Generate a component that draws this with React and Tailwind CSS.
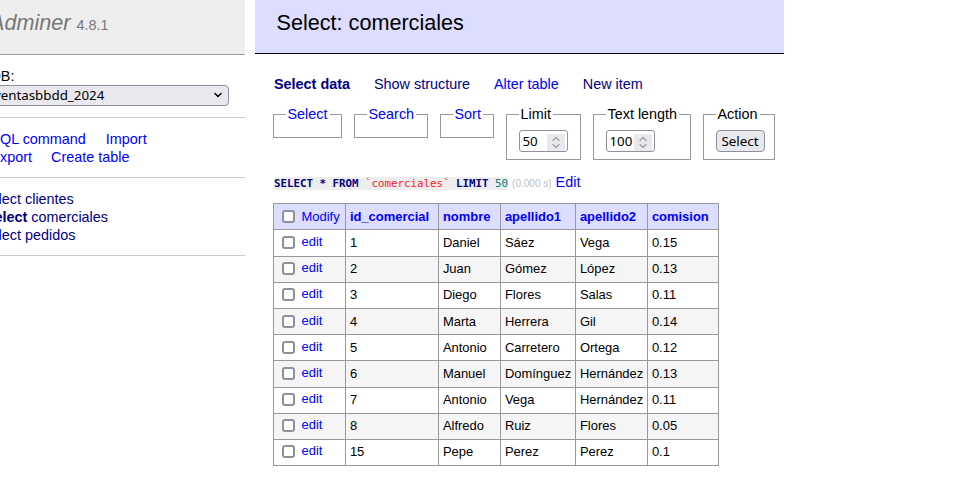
import React from 'react'

const rows = [
  ['1', 'Daniel', 'Sáez', 'Vega', '0.15'],
  ['2', 'Juan', 'Gómez', 'López', '0.13'],
  ['3', 'Diego', 'Flores', 'Salas', '0.11'],
  ['4', 'Marta', 'Herrera', 'Gil', '0.14'],
  ['5', 'Antonio', 'Carretero', 'Ortega', '0.12'],
  ['6', 'Manuel', 'Domínguez', 'Hernández', '0.13'],
  ['7', 'Antonio', 'Vega', 'Hernández', '0.11'],
  ['8', 'Alfredo', 'Ruiz', 'Flores', '0.05'],
  ['15', 'Pepe', 'Perez', 'Perez', '0.1'],
]

const columns = ['id_comercial', 'nombre', 'apellido1', 'apellido2', 'comision']
const colWidths = ['w-[93px]', 'w-[62px]', 'w-[75px]', 'w-[72px]', 'w-[71px]']

function Checkbox() {
  return (
    <span className="inline-block w-[13px] h-[13px] border-2 border-[#8f8f9d] rounded-[3px] bg-white align-[-2px] ml-[4px] mr-[3px]" />
  )
}

function NumberBox({ value }) {
  return (
    <div className="flex items-center w-[49px] h-[22px] border border-[#8f8f9d] rounded-[3px] bg-white pl-[3px] font-['Noto_Sans',sans-serif] text-[13.33px] leading-none text-black">
      <span>{value}</span>
      <span className="ml-auto mr-[2px] mt-[2px] w-[18px] h-[17px] bg-[#e9e9ed] flex items-center justify-center">
        <svg width="10" height="13" viewBox="0 0 10 13" fill="none" stroke="#9a9aa4" strokeWidth="1.2" strokeLinecap="round" strokeLinejoin="round">
          <path d="M2 4.5 5 1.5 8 4.5" />
          <path d="M2 8.5 5 11.5 8 8.5" />
        </svg>
      </span>
    </div>
  )
}

function Box({ width, legend, link, children }) {
  return (
    <fieldset className={`${width} min-w-0 shrink-0 border border-[#999] px-[11.5px] pt-[7.2px] pb-[7.2px]`}>
      <legend className={`px-[2px] whitespace-nowrap ${link ? 'text-[#0000ff]' : 'text-black'}`}>{legend}</legend>
      {children}
    </fieldset>
  )
}

export default function App() {
  return (
    <div className="w-[953px] h-[483px] overflow-hidden bg-white font-['Liberation_Sans',Arial,sans-serif] text-[14.4px] leading-[18px] text-black">
      <div className="flex">
        {/* Menu */}
        <aside className="w-[245px] shrink-0 overflow-hidden">
          <div className="-ml-[24px] w-[269px]">
            <h1 className="h-[55px] bg-[#eee] border-b border-[#999] pl-[14px] pt-[9px] text-[21.6px] leading-[27px] italic text-[#777] whitespace-nowrap">
              Adminer <span className="text-[14.4px] not-italic">4.8.1</span>
            </h1>
            <div className="px-[14.4px] py-[11.5px] border-b border-[#ccc]">
              <div>DB:</div>
              <div className="-ml-[1.5px] w-[240px] h-[21px] border border-[#8f8f9d] rounded-[4px] bg-[#e9e9ed] flex items-center pl-[4px] pr-[6px] font-['Noto_Sans',sans-serif] text-[13.33px]">
                <span>ventasbbdd_2024</span>
                <svg className="ml-auto" width="8" height="6" viewBox="0 0 8 6" fill="none" stroke="#000" strokeWidth="1.5" strokeLinecap="round" strokeLinejoin="round">
                  <path d="M1 1.5 4 4.5 7 1.5" />
                </svg>
              </div>
            </div>
            <div className="px-[14.4px] py-[11.5px] border-b border-[#ccc] text-[#0000ff] whitespace-nowrap">
              <div className="flex gap-[20px]">
                <a>SQL command</a>
                <a>Import</a>
              </div>
              <div className="flex gap-[19px]">
                <a>Export</a>
                <a>Create table</a>
              </div>
            </div>
            <div className="px-[14.4px] py-[11.5px] border-b border-[#ccc] text-[#000080] whitespace-nowrap">
              <ul className="-ml-[7px]">
                <li><a>select</a> <a>clientes</a></li>
                <li className="pl-[3px]"><a className="font-bold">select</a> <a>comerciales</a></li>
                <li><a>select</a> <a>pedidos</a></li>
              </ul>
            </div>
          </div>
        </aside>

        {/* Content */}
        <main className="ml-[10px] w-[529px] shrink-0">
          <h2 className="h-[54px] bg-[#ddf] border-b border-black px-[21.6px] pt-[9px] text-[21.6px] leading-[27px] text-black">
            Select: comerciales
          </h2>
          <div className="pl-[18px]">
            <p className="mt-[21px] flex gap-[24px] pl-[1px] text-[#000080]">
              <b>Select data</b>
              <a>Show structure</a>
              <a className="text-[#0000ff]">Alter table</a>
              <a>New item</a>
            </p>

            <div className="mt-[12px] flex items-start gap-[12px]">
              <Box width="w-[69px]" legend="Select" link />
              <Box width="w-[74px]" legend="Search" link />
              <Box width="w-[54px]" legend="Sort" link />
              <Box width="w-[75px]" legend="Limit">
                <NumberBox value="50" />
              </Box>
              <Box width="w-[98px]" legend="Text length">
                <NumberBox value="100" />
              </Box>
              <Box width="w-[72px]" legend="Action">
                <button className="w-[49px] h-[22px] border border-[#8f8f9d] rounded-[4px] bg-[#e9e9ed] font-['Noto_Sans',sans-serif] text-[13.33px] leading-none text-black">
                  Select
                </button>
              </Box>
            </div>

            <p className="mt-[13px] pl-[1px] whitespace-nowrap">
              <code className="bg-[#eee] font-['DejaVu_Sans_Mono',monospace] text-[10.8px]">
                <span className="font-bold text-[#000080]">SELECT * FROM</span>{' '}
                <span className="text-[#ff2020]">`comerciales`</span>{' '}
                <span className="font-bold text-[#000080]">LIMIT</span>{' '}
                <span className="text-[#008080]">50</span>
              </code>{' '}
              <span className="text-[10px] text-[#c0c0c0]">(0.000 s)</span>{' '}
              <a className="text-[#0000ff]">Edit</a>
            </p>

            <table className="mt-[10px] table-fixed border-collapse w-[446px] text-[12.96px] leading-[16px]">
              <thead>
                <tr className="h-[26px] bg-[#ddf]">
                  <td className="w-[72px] border border-[#999] px-[3.9px] text-[#0000ff] whitespace-nowrap">
                    <Checkbox /> <a>Modify</a>
                  </td>
                  {columns.map((c, i) => (
                    <th
                      key={c}
                      className={`${colWidths[i]} border border-[#999] px-[3.9px] text-left font-bold text-[#0000ff] whitespace-nowrap`}
                    >
                      {c}
                    </th>
                  ))}
                </tr>
              </thead>
              <tbody>
                {rows.map((r, i) => (
                  <tr key={i} className={`h-[26.2px] ${i % 2 === 1 ? 'bg-[#f5f5f5]' : 'bg-white'}`}>
                    <td className="border border-[#999] px-[3.9px] whitespace-nowrap">
                      <Checkbox /> <a className="text-[#0000ff] relative -top-[1px]">edit</a>
                    </td>
                    {r.map((v, j) => (
                      <td key={j} className="border border-[#999] px-[3.9px] whitespace-nowrap">
                        {v}
                      </td>
                    ))}
                  </tr>
                ))}
              </tbody>
            </table>
          </div>
        </main>
      </div>
    </div>
  )
}
